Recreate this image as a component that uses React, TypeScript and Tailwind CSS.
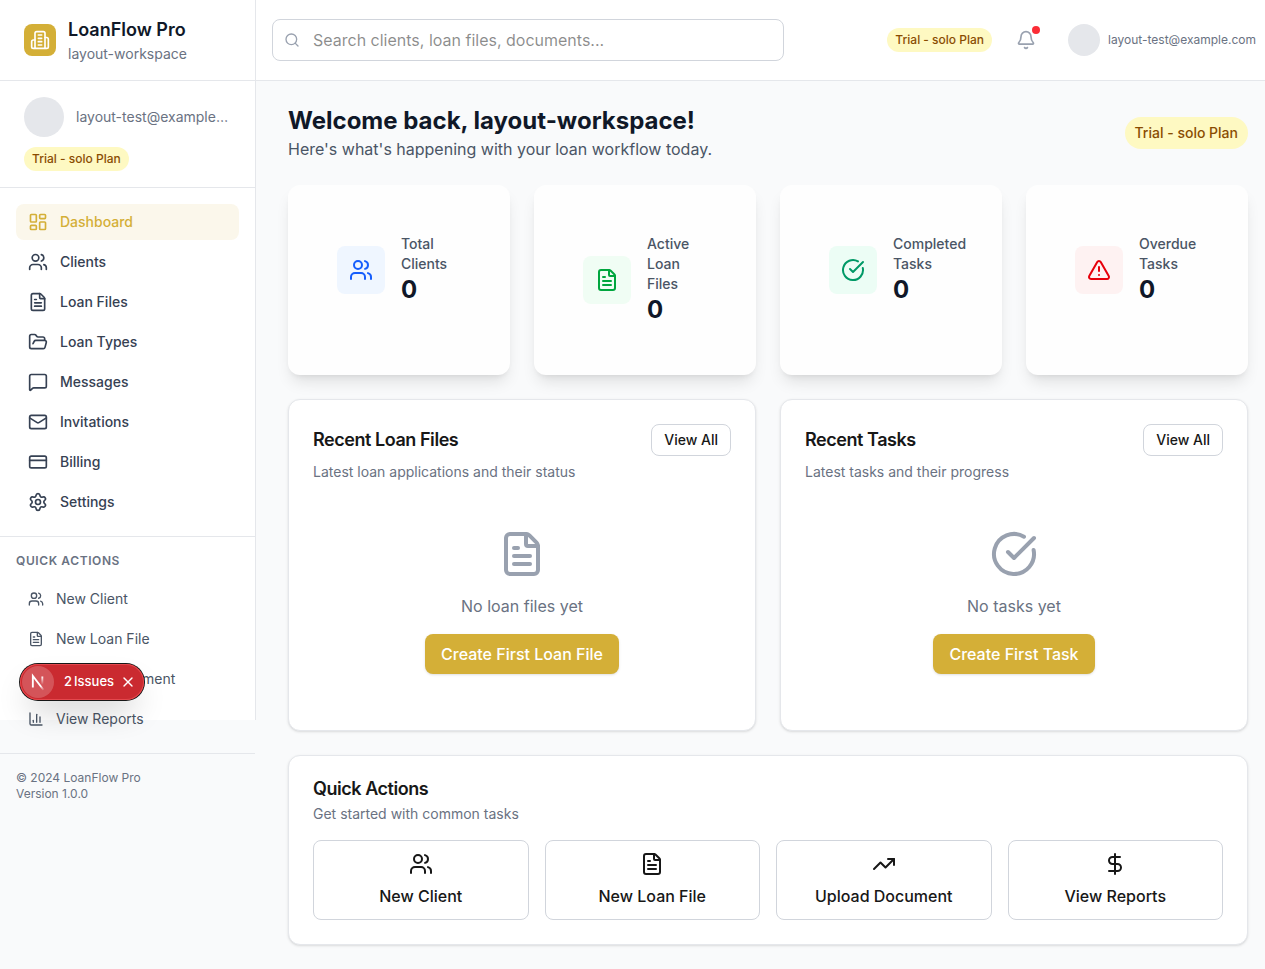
import React from 'react';
import {
  Bell,
  ChartColumn,
  CircleCheckBig,
  CreditCard,
  DollarSign,
  FileText,
  FolderOpen,
  LayoutDashboard,
  Mail,
  MessageSquare,
  Search,
  Settings,
  TrendingUp,
  TriangleAlert,
  Users,
  X,
  type LucideIcon,
} from 'lucide-react';

type Item = { label: string; icon: LucideIcon };

const navItems: Item[] = [
  { label: 'Dashboard', icon: LayoutDashboard },
  { label: 'Clients', icon: Users },
  { label: 'Loan Files', icon: FileText },
  { label: 'Loan Types', icon: FolderOpen },
  { label: 'Messages', icon: MessageSquare },
  { label: 'Invitations', icon: Mail },
  { label: 'Billing', icon: CreditCard },
  { label: 'Settings', icon: Settings },
];

const sidebarActions: Item[] = [
  { label: 'New Client', icon: Users },
  { label: 'New Loan File', icon: FileText },
  { label: 'Upload Document', icon: TrendingUp },
  { label: 'View Reports', icon: ChartColumn },
];

const quickActions: Item[] = [
  { label: 'New Client', icon: Users },
  { label: 'New Loan File', icon: FileText },
  { label: 'Upload Document', icon: TrendingUp },
  { label: 'View Reports', icon: DollarSign },
];

const stats = [
  { label: 'Total Clients', value: 0, icon: Users, tone: 'bg-blue-50 text-blue-600' },
  { label: 'Active Loan Files', value: 0, icon: FileText, tone: 'bg-green-50 text-green-600' },
  { label: 'Completed Tasks', value: 0, icon: CircleCheckBig, tone: 'bg-emerald-50 text-emerald-600' },
  { label: 'Overdue Tasks', value: 0, icon: TriangleAlert, tone: 'bg-red-50 text-red-600' },
];

function BuildingIcon() {
  return (
    <svg
      className="size-5"
      viewBox="0 0 24 24"
      fill="none"
      stroke="currentColor"
      strokeWidth="2"
      strokeLinecap="round"
      strokeLinejoin="round"
      aria-hidden="true"
    >
      <path d="M6 22V4a2 2 0 0 1 2-2h8a2 2 0 0 1 2 2v18Z" />
      <path d="M6 12H4a2 2 0 0 0-2 2v6a2 2 0 0 0 2 2h2" />
      <path d="M18 9h2a2 2 0 0 1 2 2v9a2 2 0 0 1-2 2h-2" />
      <path d="M10 6h4" />
      <path d="M10 10h4" />
      <path d="M10 14h4" />
      <path d="M10 18h4" />
    </svg>
  );
}

function PlanBadge() {
  return (
    <span className="inline-flex shrink-0 rounded-full bg-yellow-100 px-2 py-1 text-xs font-medium text-yellow-800">
      Trial - solo Plan
    </span>
  );
}

function IssuesToast() {
  return (
    <div className="absolute bottom-5 left-5 flex h-9 items-center rounded-full bg-[#ca2a30] p-0.5 text-[13px] text-white shadow-[0_0_0_1px_#171717,inset_0_0_0_1px_#e5484d,0_16px_32px_-8px_rgba(0,0,0,0.24)]">
      <button type="button" aria-label="Open developer tools" className="size-8 rounded-full bg-white/20">
        <svg className="size-8" viewBox="0 0 32 32" fill="none" aria-hidden="true">
          <g transform="translate(8.5 9)">
            <path d="M13.3 15.2 L2.34 1 V12.6" stroke="url(#diagonal)" strokeWidth="1.86" />
            <path d="M11.825 1.5 V13.1" stroke="url(#stem)" strokeWidth="1.86" />
          </g>
          <defs>
            <linearGradient id="diagonal" x1="9.955" y1="11.12" x2="15.467" y2="17.967" gradientUnits="userSpaceOnUse">
              <stop stopColor="white" />
              <stop offset="0.604" stopColor="white" stopOpacity="0" />
              <stop offset="1" stopColor="white" stopOpacity="0" />
            </linearGradient>
            <linearGradient id="stem" x1="11.822" y1="1.4" x2="11.791" y2="9.626" gradientUnits="userSpaceOnUse">
              <stop stopColor="white" />
              <stop offset="1" stopColor="white" stopOpacity="0" />
            </linearGradient>
          </defs>
        </svg>
      </button>
      <button type="button" className="ml-2.5 flex gap-0.5 font-medium">
        <span>2</span>
        <span>Issues</span>
      </button>
      <button type="button" aria-label="Dismiss issues" className="mx-1.5">
        <X className="size-4" />
      </button>
    </div>
  );
}

function Sidebar() {
  return (
    <aside className="relative h-[720px] w-64 shrink-0 border-r border-gray-200 bg-white">
      <div className="flex items-center gap-3 border-b border-gray-200 px-6 py-4">
        <div className="flex size-8 items-center justify-center rounded-lg bg-[#d4af37] text-white">
          <BuildingIcon />
        </div>
        <div>
          <p className="text-lg font-semibold text-gray-900">LoanFlow Pro</p>
          <p className="text-sm text-gray-500">layout-workspace</p>
        </div>
      </div>

      <div className="border-b border-gray-200 px-6 py-4">
        <div className="flex items-center gap-3">
          <div className="size-10 shrink-0 rounded-full bg-gray-200" />
          <p className="min-w-0 truncate text-sm text-gray-500">layout-test@example.com</p>
        </div>
        <div className="mt-2.5 flex">
          <PlanBadge />
        </div>
      </div>

      <nav className="flex flex-col gap-1 p-4">
        {navItems.map(({ label, icon: Icon }, i) => (
          <a
            key={label}
            href="#"
            className={
              i === 0
                ? 'flex items-center gap-3 rounded-lg bg-[#d4af37]/10 px-3 py-2 text-sm font-medium text-[#d4af37]'
                : 'flex items-center gap-3 rounded-lg px-3 py-2 text-sm font-medium text-gray-700'
            }
          >
            <Icon className="size-5" />
            {label}
          </a>
        ))}
      </nav>

      <div className="border-t border-gray-200 p-4">
        <h2 className="mb-3 text-xs font-semibold tracking-wider text-gray-500 uppercase">Quick Actions</h2>
        <div className="flex flex-col gap-1">
          {sidebarActions.map(({ label, icon: Icon }) => (
            <a key={label} href="#" className="flex items-center gap-3 rounded-lg px-3 py-2 text-sm text-gray-600">
              <Icon className="size-4" />
              {label}
            </a>
          ))}
        </div>
      </div>

      <div className="border-t border-gray-200 p-4 text-xs text-gray-500">
        <p>© 2024 LoanFlow Pro</p>
        <p>Version 1.0.0</p>
      </div>

      <IssuesToast />
    </aside>
  );
}

function Header() {
  return (
    <header className="flex h-[81px] items-center justify-between gap-6 border-b border-gray-200 bg-white pr-[9px] pl-4">
      <div className="relative w-full max-w-lg">
        <Search className="absolute top-1/2 left-3 size-4 -translate-y-1/2 text-gray-400" />
        <input
          type="search"
          aria-label="Search"
          placeholder="Search clients, loan files, documents..."
          className="w-full rounded-lg border border-gray-300 py-2 pr-4 pl-10 text-base"
        />
      </div>
      <div className="flex items-center gap-4">
        <PlanBadge />
        <button type="button" aria-label="Notifications" className="relative p-2 text-gray-400">
          <Bell className="size-5" />
          <span className="absolute top-1 right-1 size-2 rounded-full bg-[#fb2c36]" />
        </button>
        <div className="ml-2 flex items-center gap-2">
          <div className="size-8 shrink-0 rounded-full bg-gray-200" />
          <span className="text-xs text-gray-500">layout-test@example.com</span>
        </div>
      </div>
    </header>
  );
}

type RecentProps = { title: string; description: string; icon: LucideIcon; empty: string; action: string };

function RecentCard({ title, description, icon: Icon, empty, action }: RecentProps) {
  return (
    <section className="rounded-xl border border-gray-200 bg-white p-6 shadow-sm">
      <div className="flex items-center justify-between">
        <h2 className="text-lg leading-none font-semibold tracking-tight">{title}</h2>
        <button type="button" className="h-8 rounded-lg border border-gray-300 px-3 text-sm font-medium">
          View All
        </button>
      </div>
      <p className="mt-1.5 text-sm text-gray-500">{description}</p>
      <div className="mt-4 flex flex-col items-center gap-4 py-8">
        <Icon className="size-12 text-gray-400" />
        <p className="text-base text-gray-500">{empty}</p>
        <button type="button" className="h-10 rounded-lg bg-[#d4af37] px-4 text-base font-medium text-white shadow-sm">
          {action}
        </button>
      </div>
    </section>
  );
}

export default function App() {
  return (
    <div className="flex min-h-screen bg-gray-50 font-[Inter,sans-serif] text-[#171717]">
      <Sidebar />
      <div className="min-w-0 flex-1">
        <Header />
        <main className="flex flex-col gap-6 py-6 pr-[17px] pl-8">
          <div className="flex items-center justify-between">
            <div>
              <h1 className="text-2xl font-bold text-gray-900">Welcome back, layout-workspace!</h1>
              <p className="text-base text-gray-600">Here's what's happening with your loan workflow today.</p>
            </div>
            <span className="rounded-full bg-yellow-100 px-2.5 py-1.5 text-sm font-medium text-yellow-800">
              Trial - solo Plan
            </span>
          </div>

          <div className="grid grid-cols-4 gap-6">
            {stats.map(({ label, value, icon: Icon, tone }) => (
              <div key={label} className="rounded-xl bg-[#fefefe] p-[49px] shadow-lg">
                <div className="flex items-center gap-4">
                  <div className={`flex size-12 shrink-0 items-center justify-center rounded-lg ${tone}`}>
                    <Icon className="size-6" />
                  </div>
                  <div className="min-w-0">
                    <p className="text-sm font-medium text-gray-600">{label}</p>
                    <p className="text-2xl font-bold text-gray-900">{value}</p>
                  </div>
                </div>
              </div>
            ))}
          </div>

          <div className="grid grid-cols-2 gap-6">
            <RecentCard
              title="Recent Loan Files"
              description="Latest loan applications and their status"
              icon={FileText}
              empty="No loan files yet"
              action="Create First Loan File"
            />
            <RecentCard
              title="Recent Tasks"
              description="Latest tasks and their progress"
              icon={CircleCheckBig}
              empty="No tasks yet"
              action="Create First Task"
            />
          </div>

          <section className="rounded-xl border border-gray-200 bg-white p-6 shadow-sm">
            <h2 className="text-lg leading-none font-semibold tracking-tight">Quick Actions</h2>
            <p className="mt-1.5 text-sm text-gray-500">Get started with common tasks</p>
            <div className="mt-4 grid grid-cols-4 gap-4">
              {quickActions.map(({ label, icon: Icon }) => (
                <button
                  key={label}
                  type="button"
                  className="flex h-20 flex-col items-center justify-center gap-2 rounded-lg border border-gray-300 text-base font-medium"
                >
                  <Icon className="size-6" />
                  {label}
                </button>
              ))}
            </div>
          </section>
        </main>
      </div>
    </div>
  );
}
